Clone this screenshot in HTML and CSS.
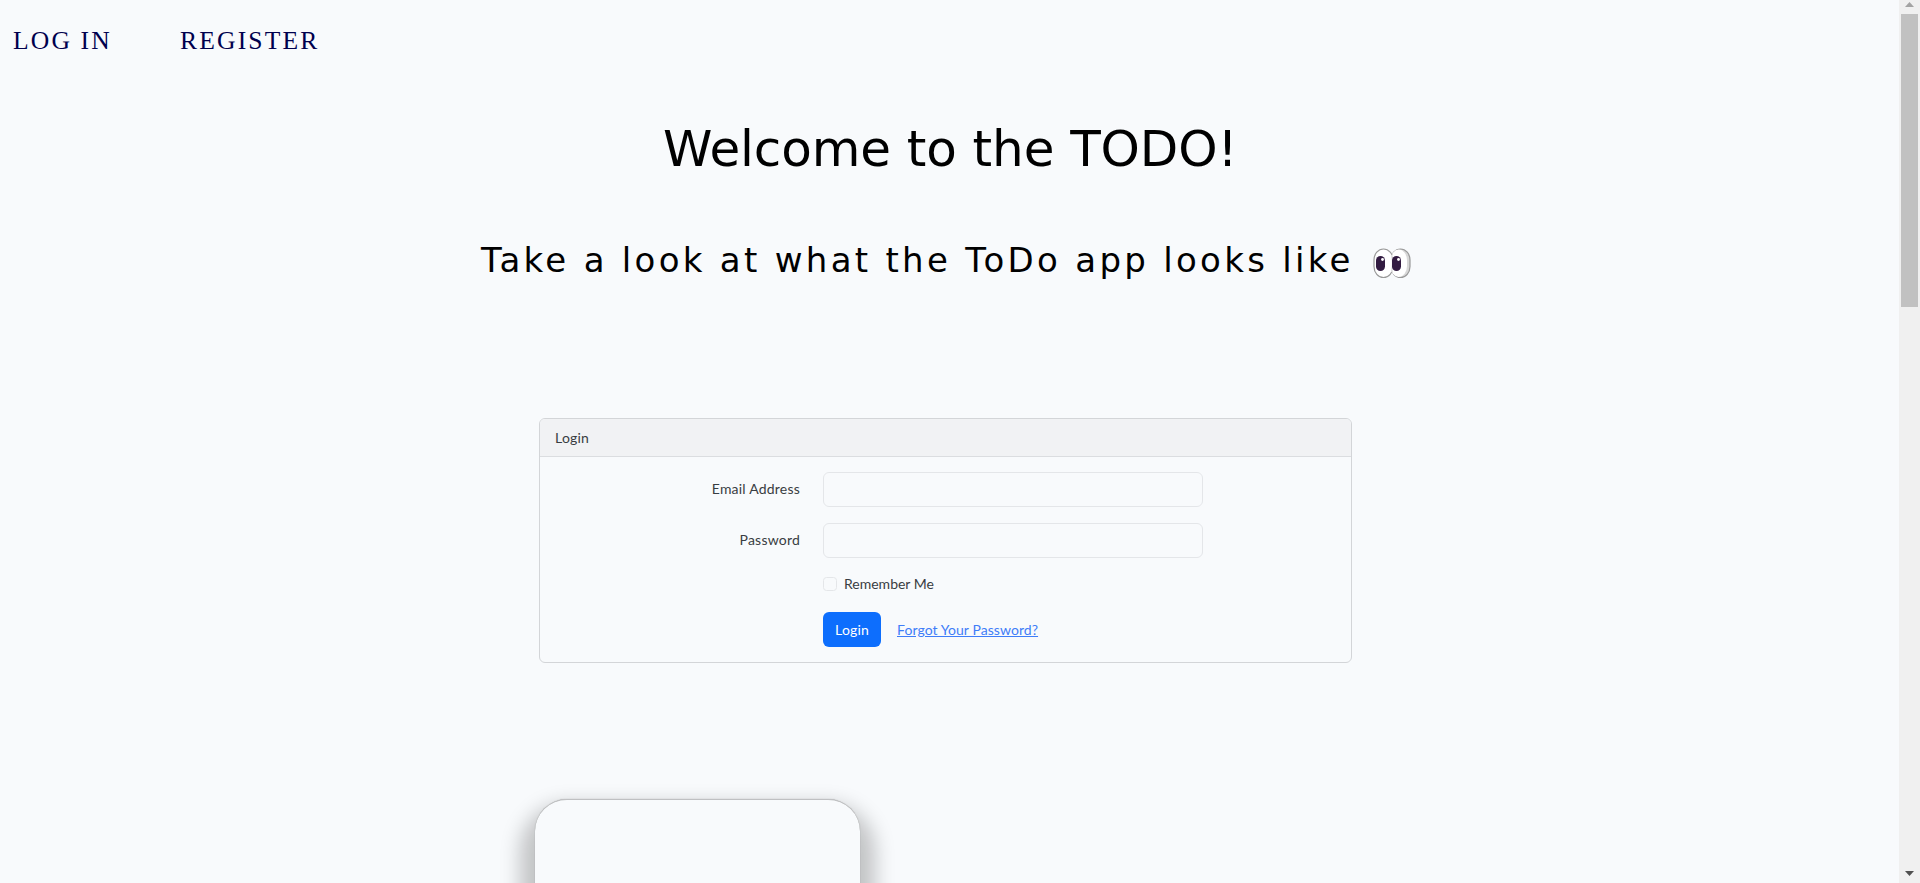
FILE: index.html
```html
<!DOCTYPE html>
<html lang="en">
<head>
<meta charset="utf-8">
<title>TODO</title>
<link rel="stylesheet" href="styles.css">
</head>
<body>
<main class="page">
  <nav class="nav"><a class="nav-login" href="#">LOG IN</a><a class="nav-register" href="#">REGISTER</a></nav>
  <h1 class="title"><span>Welcome to the TODO!</span></h1>
  <h2 class="subtitle"><span class="subtitle-text">Take a look at what the ToDo app looks like</span>
    <svg class="eyes" viewBox="0 0 38 31" width="38" height="31">
      <rect x="18" y="1" width="19" height="28.5" rx="9.5" ry="11" fill="#d8d8d8" stroke="#999" stroke-width="1.2"/>
      <rect x="17.5" y="1.6" width="16.5" height="27.3" rx="8.2" ry="11" fill="#fff"/>
      <rect x="1" y="1" width="19" height="28.5" rx="9.5" ry="11" fill="#fff" stroke="#999" stroke-width="1.2"/>
      <rect x="15" y="7" width="6" height="16.5" fill="#fff"/>
      <path d="M18.7 7Q20.5 15 18.7 23.5" fill="none" stroke="#ddd" stroke-width="1.5"/>
      <rect x="3" y="8" width="9" height="15" rx="4.5" fill="#321b41"/>
      <rect x="19" y="8" width="9" height="15" rx="4.5" fill="#321b41"/>
      <circle cx="9.5" cy="11.5" r="1.4" fill="#fff"/><circle cx="25.5" cy="11.5" r="1.4" fill="#fff"/>
    </svg>
  </h2>
  <section class="card">
    <header class="card-header">Login</header>
    <form class="form">
      <label class="label" for="email">Email Address</label><input class="input" id="email" type="email">
      <label class="label" for="password">Password</label><input class="input" id="password" type="password">
      <label class="remember"><input class="check" type="checkbox"><span class="remember-text">Remember Me</span></label>
      <div class="actions"><button class="button" type="button">Login</button><a class="forgot" href="#">Forgot Your Password?</a></div>
    </form>
  </section>
  <section class="preview"></section>
</main>
<aside class="scrollbar">
  <svg width="21" height="14" viewBox="0 0 21 14"><path d="M6 7L10.5 2L15 7Z" fill="#a3a3a3"/></svg>
  <div class="thumb"></div>
  <svg class="down" width="21" height="14" viewBox="0 0 21 14"><path d="M6 2H15L10.5 7Z" fill="#505050"/></svg>
</aside>
</body>
</html>
```
FILE: styles.css
```css
* { box-sizing: border-box; }
body {
  margin: 0;
  height: 883px;
  overflow: hidden;
  display: flex;
  background: #f8fafc;
  color: #383d42;
  font-family: Lato, "Open Sans", sans-serif;
  font-size: 14px;
}
.page { width: 1899px; height: 883px; overflow: hidden; }
.nav {
  display: flex;
  height: 80px;
  padding-left: 13px;
  font: 25.6px/82px "Liberation Serif", serif;
  letter-spacing: 2.15px;
}
.nav a { color: #00004e; text-decoration: none; white-space: nowrap; }
.nav-login { width: 167px; }
.title, .subtitle {
  margin: 0;
  color: #000;
  font-family: "DejaVu Sans", sans-serif;
  font-weight: 400;
  white-space: nowrap;
}
.title { height: 136px; padding-left: 663px; font-size: 50px; line-height: 138px; letter-spacing: -.1px; }
.subtitle {
  display: flex;
  align-items: center;
  height: 88px;
  padding-left: 481px;
  font-size: 34px;
  line-height: 88px;
  letter-spacing: 3.29px;
}
.subtitle-text { width: 892px; }
.eyes { margin-top: 6px; }
.card {
  width: 813px;
  height: 245px;
  margin: 114px 0 0 539px;
  border: 1px solid #d3d5d8;
  border-radius: 6px;
  overflow: hidden;
}
.card-header {
  height: 38px;
  padding-left: 15px;
  background: #f1f2f4;
  border-bottom: 1px solid #dbdde0;
  line-height: 37px;
  letter-spacing: .2px;
}
.form {
  display: grid;
  grid-template-columns: 260px 380px;
  grid-template-rows: 35px 35px 14px 35px;
  column-gap: 23px;
  padding-top: 15px;
  row-gap: 16px;
}
.label { text-align: right; line-height: 34px; letter-spacing: .21px; }
.input {
  width: 380px;
  height: 35px;
  border: 1px solid #e4e6e9;
  border-radius: 6px;
  background: #f8fafc;
}
.remember { grid-column: 2; display: flex; align-items: center; gap: 7px; margin-top: 3px; height: 14px; }
.remember-text { margin-top: -2px; }
.check {
  appearance: none;
  width: 14px;
  height: 14px;
  margin: 0;
  border: 1px solid #e4e6e9;
  border-radius: 3.5px;
}
.actions { grid-column: 2; display: flex; align-items: center; gap: 16px; margin-top: 8px; height: 35px; }
.button {
  width: 58px;
  height: 35px;
  padding: 0 0 1px;
  border: 0;
  border-radius: 6px;
  background: #0d6efd;
  color: #fff;
  font: inherit;
  letter-spacing: .15px;
}
.forgot { color: #3f7df8; text-decoration: underline; letter-spacing: .07px; margin-top: -1px; }
.preview {
  width: 325px;
  height: 500px;
  margin: 136px 0 0 535px;
  border-top: 1px solid #bfc0c2;
  border-radius: 32px;
  background: #f8fafc;
  box-shadow: 0 20px 20px 15px rgba(0, 0, 0, .22), 0 0 1px #aaa;
}
.scrollbar { width: 21px; height: 883px; display: flex; flex-direction: column; background: #f0f0f0; }
.scrollbar svg { flex: none; }
.thumb { width: 17px; height: 293px; margin-left: 2px; background: #c1c1c1; }
.down { margin-top: auto; }
```
